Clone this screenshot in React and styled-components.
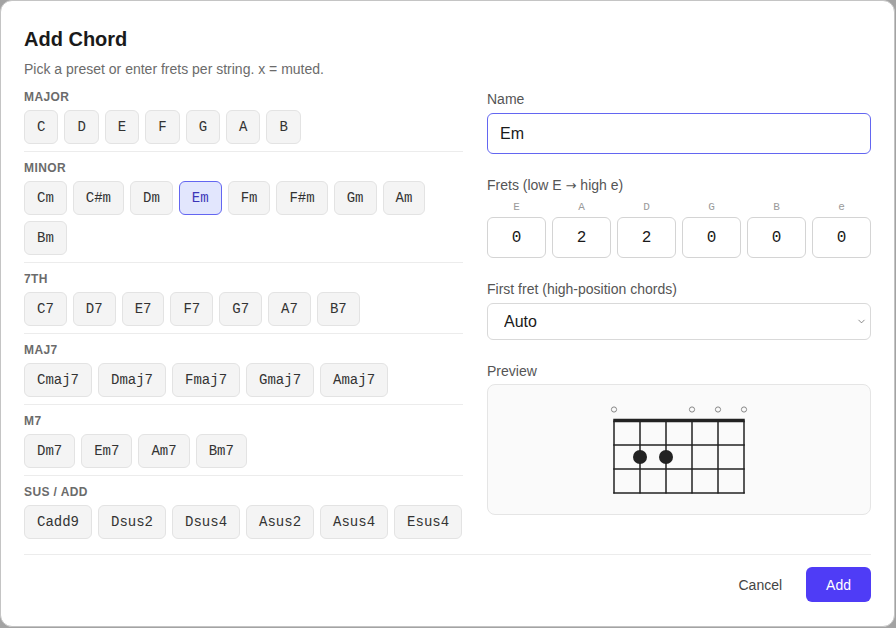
import React from "react";
import styled, { createGlobalStyle } from "styled-components";
import { ChevronDown } from "lucide-react";

const Global = createGlobalStyle`
  html, body { margin: 0; padding: 0; background: #a3a3a3; }
  body { font-family: "Liberation Sans", Arial, sans-serif; }
  * { box-sizing: border-box; }
`;

const MONO = `"Liberation Mono", "DejaVu Sans Mono", monospace`;

const Dialog = styled.div`
  width: 895px;
  background: #fff;
  border: 1px solid #c4c4c4;
  border-radius: 12px;
  padding: 24px 23px 24px;
  display: flex;
  flex-direction: column;
  color: #1f1f1f;
`;

const Title = styled.h2`
  margin: 0;
  font-size: 20px;
  line-height: 28px;
  font-weight: 700;
  color: #1a1a1a;
`;

const Subtitle = styled.p`
  margin: 6px 0 2px;
  font-size: 14px;
  line-height: 20px;
  color: #6b6b6b;
`;

const Body = styled.div`
  display: grid;
  grid-template-columns: 1fr 384px;
  column-gap: 24px;
  align-items: start;
`;

const Presets = styled.div`
  display: flex;
  flex-direction: column;
`;

const Section = styled.section`
  padding: 8px 0 7px;
  border-bottom: ${(p) => (p.$last ? "none" : "1px solid #ececec")};
`;

const SectionLabel = styled.div`
  font-size: 12px;
  line-height: 16px;
  font-weight: 700;
  letter-spacing: 0.4px;
  text-transform: uppercase;
  color: #6b6b6b;
  margin-bottom: 5px;
`;

const ChipRow = styled.div`
  display: flex;
  flex-wrap: wrap;
  gap: 6px;
`;

const Chip = styled.button`
  font-family: ${MONO};
  font-size: 14px;
  line-height: 20px;
  padding: 6px 12px;
  border-radius: 6px;
  border: 1px solid ${(p) => (p.$active ? "#6366f1" : "#e3e3e3")};
  background: ${(p) => (p.$active ? "#e2e6fd" : "#f4f4f4")};
  color: ${(p) => (p.$active ? "#3b35b8" : "#333")};
  cursor: pointer;
`;

const Form = styled.div`
  padding-top: 8px;
  display: flex;
  flex-direction: column;
  gap: 21px;
`;

const Field = styled.div`
  display: flex;
  flex-direction: column;
`;

const Label = styled.label`
  font-size: 14px;
  line-height: 20px;
  height: 20px;
  color: #555;
  margin-bottom: ${(p) => p.$mb ?? 4}px;
`;

const Arrow = styled.span`
  font-family: "DejaVu Sans", sans-serif;
  font-size: 13px;
  line-height: 1;
`;

const TextInput = styled.input`
  height: 41px;
  padding: 0 12px;
  font-family: "Liberation Sans", Arial, sans-serif;
  font-size: 16px;
  color: #1a1a1a;
  border: 1px solid #6366f1;
  border-radius: 6px;
  outline: none;
  background: #fff;
`;

const FretGrid = styled.div`
  display: grid;
  grid-template-columns: repeat(6, 1fr);
  gap: 6px;
`;

const FretCol = styled.div`
  display: flex;
  flex-direction: column;
  align-items: stretch;
`;

const StringName = styled.span`
  font-family: ${MONO};
  font-size: 11px;
  line-height: 16px;
  color: #9a9a9a;
  text-align: center;
  margin-bottom: 2px;
`;

const FretInput = styled.input`
  width: 100%;
  height: 41px;
  text-align: center;
  font-family: ${MONO};
  font-size: 16px;
  color: #1a1a1a;
  border: 1px solid #d4d4d4;
  border-radius: 6px;
  background: #fff;
  outline: none;
`;

const SelectWrap = styled.div`
  position: relative;
  display: flex;
  flex-direction: column;
`;

const Select = styled.select`
  appearance: none;
  height: 37px;
  padding: 0 28px 0 16px;
  font-family: "Liberation Sans", Arial, sans-serif;
  font-size: 16px;
  color: #1a1a1a;
  border: 1px solid #d9d9d9;
  border-radius: 6px;
  background: #fff;
  outline: none;
`;

const Chevron = styled(ChevronDown)`
  position: absolute;
  right: 4px;
  top: 13px;
  width: 11px;
  height: 11px;
  color: #555;
  pointer-events: none;
`;

const PreviewBox = styled.div`
  height: 131px;
  border: 1px solid #e5e5e5;
  border-radius: 8px;
  background: #fafafa;
  display: flex;
  align-items: center;
  justify-content: center;
`;

const Footer = styled.div`
  margin-top: 8px;
  border-top: 1px solid #ececec;
  padding-top: 12px;
  display: flex;
  justify-content: flex-end;
  gap: 8px;
`;

const Button = styled.button`
  height: 35px;
  padding: 0 ${(p) => (p.$primary ? 20 : 16)}px;
  border-radius: 6px;
  border: none;
  font-family: "Liberation Sans", Arial, sans-serif;
  font-size: 14px;
  background: ${(p) => (p.$primary ? "#4f3cf6" : "transparent")};
  color: ${(p) => (p.$primary ? "#fff" : "#444")};
  cursor: pointer;
`;

const GROUPS = [
  ["Major", ["C", "D", "E", "F", "G", "A", "B"]],
  ["Minor", ["Cm", "C#m", "Dm", "Em", "Fm", "F#m", "Gm", "Am", "Bm"]],
  ["7th", ["C7", "D7", "E7", "F7", "G7", "A7", "B7"]],
  ["maj7", ["Cmaj7", "Dmaj7", "Fmaj7", "Gmaj7", "Amaj7"]],
  ["m7", ["Dm7", "Em7", "Am7", "Bm7"]],
  ["sus / add", ["Cadd9", "Dsus2", "Dsus4", "Asus2", "Asus4", "Esus4"]],
];

const STRINGS = ["E", "A", "D", "G", "B", "e"];
const FRETS = ["0", "2", "2", "0", "0", "0"];

function ChordDiagram({ frets }) {
  const xs = [5, 31, 57, 83, 109, 135];
  const rows = [45, 69, 93];
  const top = 20.5;
  return (
    <svg width="140" height="100" viewBox="0 0 140 100">
      {frets.map((f, i) =>
        f === "0" ? (
          <circle key={"o" + i} cx={xs[i]} cy={9.5} r={2.6} fill="none" stroke="#888" strokeWidth="1" />
        ) : null
      )}
      {xs.map((x) => (
        <line key={"s" + x} x1={x} y1={top} x2={x} y2={93.5} stroke="#222" strokeWidth="1.5" />
      ))}
      {rows.map((y) => (
        <line key={"f" + y} x1={4.25} y1={y} x2={135.75} y2={y} stroke="#222" strokeWidth="1.5" />
      ))}
      <line x1={4.25} y1={top} x2={135.75} y2={top} stroke="#222" strokeWidth="3.5" />
      {frets.map((f, i) => {
        const n = parseInt(f, 10);
        if (!n) return null;
        const y = n === 1 ? (top + rows[0]) / 2 : (rows[n - 2] + rows[n - 1]) / 2;
        return <circle key={"d" + i} cx={xs[i]} cy={y} r={7} fill="#222" />;
      })}
    </svg>
  );
}

export default function App() {
  return (
    <>
      <Global />
      <Dialog>
        <Title>Add Chord</Title>
        <Subtitle>Pick a preset or enter frets per string. x = muted.</Subtitle>
        <Body>
          <Presets>
            {GROUPS.map(([name, chords], gi) => (
              <Section key={name} $last={gi === GROUPS.length - 1}>
                <SectionLabel>{name}</SectionLabel>
                <ChipRow>
                  {chords.map((c) => (
                    <Chip key={c} $active={c === "Em"}>
                      {c}
                    </Chip>
                  ))}
                </ChipRow>
              </Section>
            ))}
          </Presets>
          <Form>
            <Field>
              <Label>Name</Label>
              <TextInput defaultValue="Em" />
            </Field>
            <Field>
              <Label>
                Frets (low E <Arrow>→</Arrow> high e)
              </Label>
              <FretGrid>
                {STRINGS.map((s, i) => (
                  <FretCol key={s}>
                    <StringName>{s}</StringName>
                    <FretInput defaultValue={FRETS[i]} />
                  </FretCol>
                ))}
              </FretGrid>
            </Field>
            <Field>
              <Label $mb={4}>First fret (high-position chords)</Label>
              <SelectWrap>
                <Select defaultValue="auto">
                  <option value="auto">Auto</option>
                  <option value="1">1</option>
                  <option value="2">2</option>
                </Select>
                <Chevron strokeWidth={1.5} />
              </SelectWrap>
            </Field>
            <Field>
              <Label $mb={3}>Preview</Label>
              <PreviewBox>
                <ChordDiagram frets={FRETS} />
              </PreviewBox>
            </Field>
          </Form>
        </Body>
        <Footer>
          <Button>Cancel</Button>
          <Button $primary>Add</Button>
        </Footer>
      </Dialog>
    </>
  );
}
